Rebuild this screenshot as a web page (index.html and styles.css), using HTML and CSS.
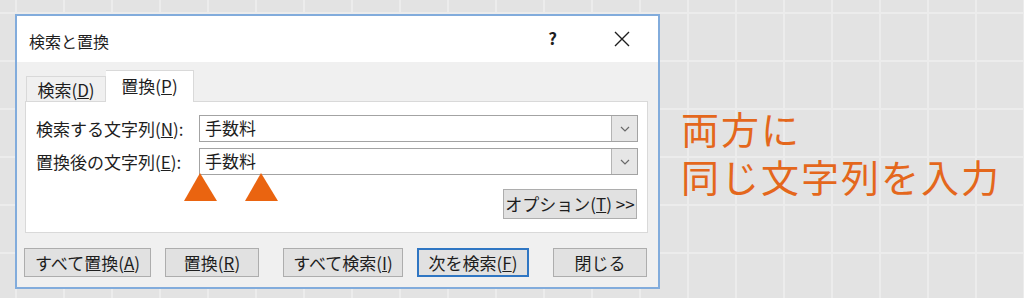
FILE: index.html
```html
<!DOCTYPE html>
<html lang="ja">
<head>
    <meta charset="UTF-8">
    <title>検索と置換</title>
    <link rel="stylesheet" href="styles.css">
</head>
<body>
    <div class="page">
        <div class="dialog">
            <div class="titlebar">
                <span class="title">検索と置換</span>
                <span class="help">?</span>
                <span class="close">
                    <svg width="16" height="16" viewBox="0 0 16 16">
                        <path d="M1 1 L15 15 M15 1 L1 15" stroke="#1e1e1e" stroke-width="1.4" fill="none"/>
                    </svg>
                </span>
            </div>
            <div class="dialog-body">
                <div class="tabs">
                    <div class="tab">検索(<u>D</u>)</div>
                    <div class="tab active">置換(<u>P</u>)</div>
                </div>
                <div class="panel">
                    <div class="field-row">
                        <label>検索する文字列(<u>N</u>):</label>
                        <div class="combo">
                            <span class="combo-text">手数料</span>
                            <span class="drop">
                                <svg width="10" height="6" viewBox="0 0 10 6">
                                    <path d="M1 1 L5 5 L9 1" stroke="#6a6a6a" stroke-width="1.2" fill="none"/>
                                </svg>
                            </span>
                        </div>
                    </div>
                    <div class="field-row">
                        <label>置換後の文字列(<u>E</u>):</label>
                        <div class="combo">
                            <span class="combo-text">手数料</span>
                            <span class="drop">
                                <svg width="10" height="6" viewBox="0 0 10 6">
                                    <path d="M1 1 L5 5 L9 1" stroke="#6a6a6a" stroke-width="1.2" fill="none"/>
                                </svg>
                            </span>
                        </div>
                    </div>
                    <div class="option-row">
                        <button class="btn option">オプション(<u>T</u>) &gt;&gt;</button>
                    </div>
                    <!-- markers pointing at the two inputs -->
                    <span class="marker marker-one"></span>
                    <span class="marker marker-two"></span>
                </div>
                <div class="buttons">
                    <button class="btn w-replace-all">すべて置換(<u>A</u>)</button>
                    <button class="btn w-replace">置換(<u>R</u>)</button>
                    <button class="btn w-find-all spaced">すべて検索(<u>I</u>)</button>
                    <button class="btn w-find-next default">次を検索(<u>F</u>)</button>
                    <button class="btn w-close spaced">閉じる</button>
                </div>
            </div>
        </div>
        <div class="note">
            <div class="note-line">両方に</div>
            <div class="note-line">同じ文字列を入力</div>
        </div>
    </div>
</body>
</html>
```

FILE: styles.css
```css
body {
    margin: 0;
    width: 1024px;
    height: 298px;
    overflow: hidden;
    font-family: "Noto Sans CJK JP", "Noto Sans", sans-serif;
    background-color: #e3e3e3;
    background-image:
        linear-gradient(to right, #ececec 2px, transparent 2px),
        linear-gradient(to bottom, #ececec 2px, transparent 2px);
    background-size: 48px 48px;
    background-position: 15px 12px;
}

.page {
    display: flex;
    align-items: flex-start;
    padding: 14px 0 0 15px;
}

.dialog {
    position: relative;
    width: 641px;
    height: 271px;
    border: 2px solid #82acdc;
    background: #f0f0f0;
    display: flex;
    flex-direction: column;
    color: #1e1e1e;
}

.titlebar {
    height: 46px;
    background: #fff;
    display: flex;
    align-items: center;
    padding-left: 12px;
    font-size: 16px;
}
.title {
    flex: 1;
    margin-top: 3px;
}
.help {
    font-size: 17px;
    font-weight: bold;
    margin-right: 57px;
    margin-top: -4px;
}
.close {
    width: 16px;
    height: 16px;
    margin-right: 28px;
    margin-top: -6px;
}

.dialog-body {
    flex: 1;
    padding: 8px 10px 0 8px;
    font-size: 17px;
}

.tabs {
    display: flex;
    align-items: flex-end;
    height: 31px;
    padding-left: 1px;
}
.tab {
    height: 26px;
    line-height: 25px;
    width: 80px;
    text-align: center;
    box-sizing: border-box;
    border: 1px solid #d9d9d9;
    border-bottom: none;
    background: #f0f0f0;
    margin-bottom: -1px;
}
.tab.active {
    height: 32px;
    line-height: 29px;
    width: 88px;
    background: #fff;
    border-left: none;
    position: relative;
    z-index: 1;
}

.panel {
    position: relative;
    border: 1px solid #d9d9d9;
    background: #fff;
    padding: 13px 9px 0 10px;
    box-sizing: border-box;
    height: 132px;
}

.field-row {
    display: flex;
    align-items: center;
    margin-bottom: 6px;
}
.field-row label {
    width: 163px;
    flex: none;
    margin-top: -1px;
}
.combo {
    flex: 1;
    height: 27px;
    box-sizing: border-box;
    border: 1px solid #a3a3a3;
    display: flex;
    align-items: stretch;
}
.combo-text {
    flex: 1;
    padding-left: 5px;
    line-height: 24px;
}
.drop {
    width: 25px;
    background: #e6e6e6;
    border-left: 1px solid #b4b4b4;
    display: flex;
    align-items: center;
    justify-content: center;
}

.option-row {
    display: flex;
    justify-content: flex-end;
    margin-top: 14px;
}

.btn {
    font-family: inherit;
    font-size: 17px;
    color: #1e1e1e;
    height: 29px;
    padding: 0;
    background: #e1e1e1;
    border: 1px solid #adadad;
    line-height: 26px;
    box-sizing: border-box;
}
.btn.option {
    width: 134px;
    height: 30px;
    margin-right: 1px;
}
.btn.default {
    border: 2px solid #2f76c3;
}

.buttons {
    display: flex;
    gap: 14px;
    margin-top: 15px;
    margin-left: -1px;
}
.buttons .spaced {
    margin-left: 10px;
}
.w-replace-all { width: 127px; }
.w-replace { width: 94px; }
.w-find-all { width: 120px; }
.w-find-next { width: 112px; }
.w-close { width: 94px; }

.marker {
    position: absolute;
    top: 71px;
    width: 0;
    height: 0;
    border-left: 16px solid transparent;
    border-right: 17px solid transparent;
    border-bottom: 28px solid #ea6410;
}
.marker-one { left: 158px; }
.marker-two { left: 219px; }

.note {
    margin: 90px 0 0 21px;
    font-size: 38px;
    letter-spacing: 2px;
    color: #e4671c;
}
.note-line {
    height: 48px;
    line-height: 48px;
}
```
